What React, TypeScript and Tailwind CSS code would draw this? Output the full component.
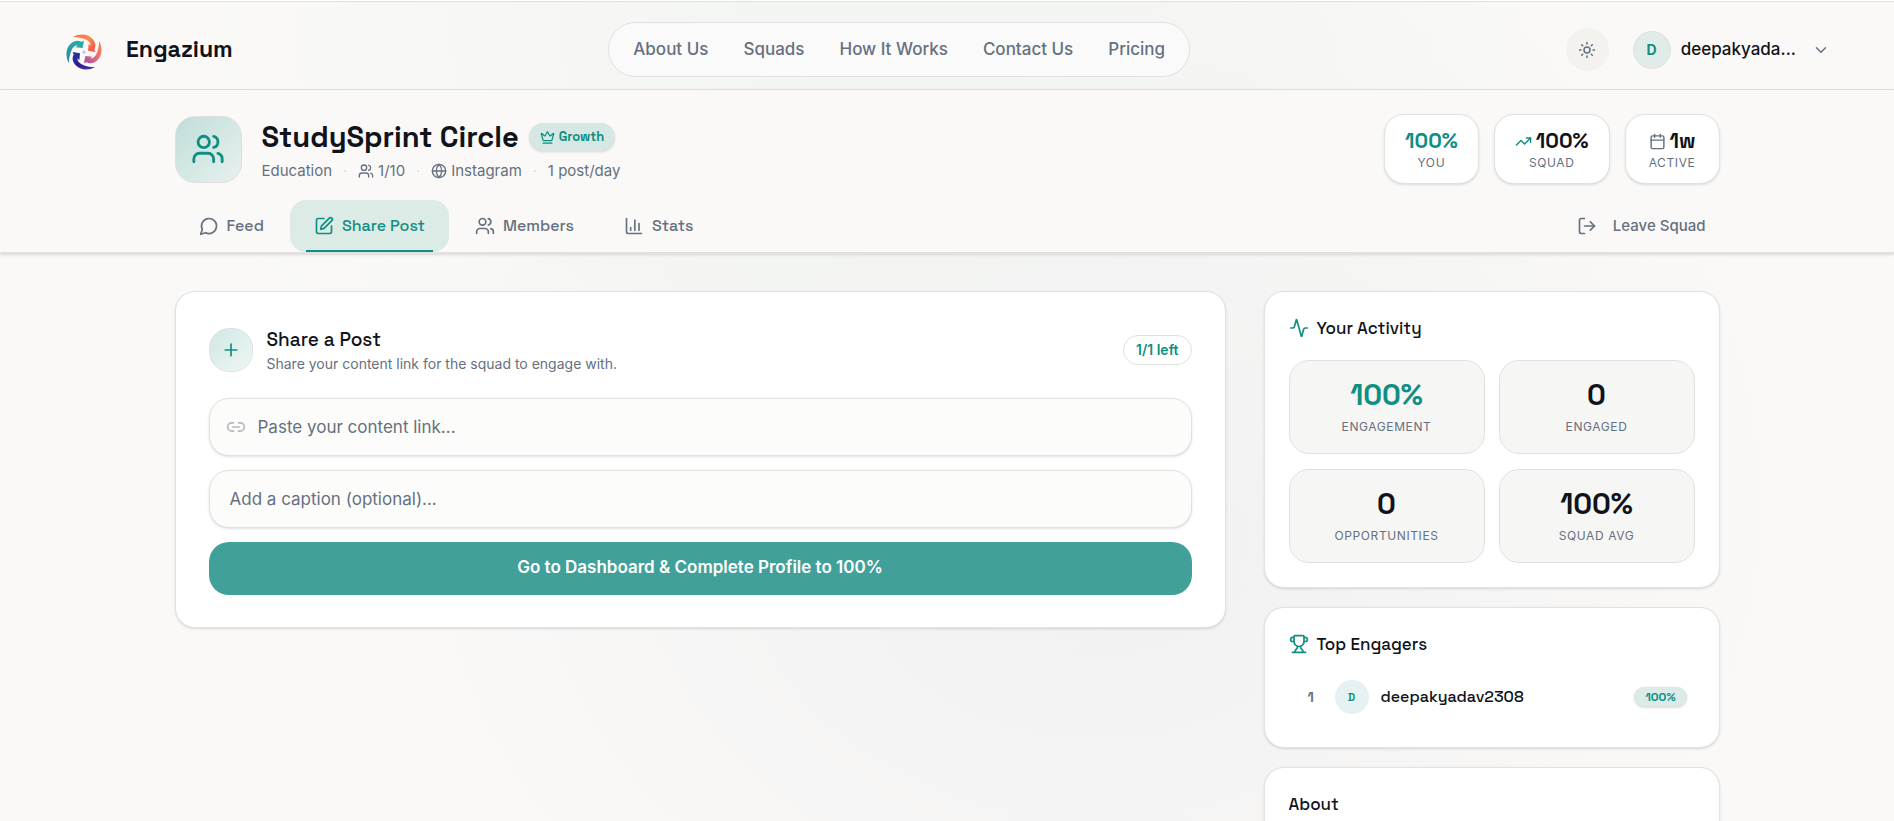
import type { ReactNode } from "react";
import {
  Activity,
  Calendar,
  ChartColumn,
  ChevronDown,
  Crown,
  Globe,
  Link2,
  LogOut,
  Plus,
  SquarePen,
  Sun,
  TrendingUp,
  Trophy,
  Users,
} from "lucide-react";

const display = "font-['Space_Grotesk','Inter',sans-serif]";

const navLinks = ["About Us", "Squads", "How It Works", "Contact Us", "Pricing"];

const activity = [
  { value: "100%", label: "Engagement", accent: true },
  { value: "0", label: "Engaged" },
  { value: "0", label: "Opportunities" },
  { value: "100%", label: "Squad Avg" },
];

function Logo() {
  const blade = "M9 88C-3 66 0 42 14 29C23 20 36 17 46 23L54 20L50 42L29 40L35 34C27 34 20 40 16 50C12 60 8 74 9 88Z";
  return (
    <svg viewBox="0 0 108 108" className="size-9" aria-hidden="true">
      <defs>
        <linearGradient id="teal" x1="0" y1="1" x2="1" y2="0">
          <stop offset="0" stopColor="#2b7fb0" />
          <stop offset="0.5" stopColor="#2a9fa8" />
          <stop offset="1" stopColor="#2fb09e" />
        </linearGradient>
        <linearGradient id="orange" x1="0" y1="1" x2="1" y2="0">
          <stop offset="0" stopColor="#fb7050" />
          <stop offset="0.5" stopColor="#f98a48" />
          <stop offset="1" stopColor="#f24a4f" />
        </linearGradient>
        <linearGradient id="pink" x1="0" y1="1" x2="1" y2="0">
          <stop offset="0" stopColor="#fb8a48" />
          <stop offset="0.5" stopColor="#ec6a78" />
          <stop offset="1" stopColor="#9a50a8" />
        </linearGradient>
        <linearGradient id="navy" x1="0" y1="1" x2="1" y2="0">
          <stop offset="0" stopColor="#5b30a8" />
          <stop offset="0.5" stopColor="#2b2096" />
          <stop offset="1" stopColor="#24389c" />
        </linearGradient>
      </defs>
      <path d={blade} fill="url(#teal)" />
      <path d={blade} fill="url(#orange)" transform="rotate(90 54 54)" />
      <path d={blade} fill="url(#pink)" transform="rotate(180 54 54)" />
      <path d={blade} fill="url(#navy)" transform="rotate(270 54 54)" />
      <path d="M54 48L60 58H48Z" fill="#c0b2e4" />
    </svg>
  );
}

function ChatIcon() {
  return (
    <svg viewBox="0 0 24 24" className="size-5" fill="none" stroke="currentColor" strokeWidth="2" strokeLinecap="round" strokeLinejoin="round" aria-hidden="true">
      <path d="M7.9 20A9 9 0 1 0 4 16.1L2 22Z" />
    </svg>
  );
}

function Tab({ icon, label, active = false }: { icon: ReactNode; label: string; active?: boolean }) {
  return (
    <button
      type="button"
      role="tab"
      aria-selected={active}
      className={`relative flex h-[52px] items-center gap-2 rounded-2xl px-6 text-base font-medium ${display} ${
        active ? "bg-[#dcebe6] text-[#0f8e82]" : "text-[#667080]"
      }`}
    >
      {icon}
      {label}
      {active && <span className="absolute inset-x-4 bottom-0 h-0.5 bg-[#0f8e82]" />}
    </button>
  );
}

function HeaderStat({ value, label, icon, accent = false }: { value: string; label: string; icon?: ReactNode; accent?: boolean }) {
  return (
    <div className="flex h-[70px] min-w-[95px] flex-col items-center justify-center rounded-[20px] border border-[#e3e2df] bg-white px-5 pt-1 shadow-sm">
      <div className={`flex items-center gap-1 text-[21px] leading-6 font-bold ${display} ${accent ? "text-[#0f8e82]" : "text-[#10131a]"}`}>
        {icon}
        {value}
      </div>
      <div className="text-xs leading-5 tracking-wider text-[#667080] uppercase">{label}</div>
    </div>
  );
}

function Card({ className = "", children }: { className?: string; children: ReactNode }) {
  return <section className={`rounded-[20px] border border-[#e3e2df] bg-white shadow-sm ${className}`}>{children}</section>;
}

function CardTitle({ icon, children }: { icon?: ReactNode; children: ReactNode }) {
  return (
    <h2 className={`flex items-center gap-2 text-[17px] leading-6 font-medium text-[#10131a] ${display}`}>
      {icon}
      {children}
    </h2>
  );
}

function Dot() {
  return <span className="size-0.5 rounded-full bg-[#dcdcdc]" />;
}

export default function App() {
  return (
    <div className="min-h-screen bg-[#faf9f7] bg-[radial-gradient(ellipse_700px_700px_at_48%_0,#f2f5f2_0%,transparent_100%),radial-gradient(ellipse_700px_600px_at_58%_60%,#f1f0f2_0%,transparent_100%)] font-['Inter',sans-serif] text-[#10131a]">
      <header className="mt-px flex h-[89px] items-center justify-between border-y border-[#dfe0df] px-16 pt-2">
        <a href="#home" className="flex items-center gap-[22px]">
          <span className="flex size-10 items-center justify-center pt-1">
            <Logo />
          </span>
          <span className={`text-[23px] font-semibold ${display}`}>Engazium</span>
        </a>
        <nav className="flex h-[55px] items-center gap-[35px] rounded-full border border-[#e1e2df] bg-[#fafafa] px-6">
          {navLinks.map((link) => (
            <a key={link} href="#nav" className="text-[17px] font-medium text-[#667080]">
              {link}
            </a>
          ))}
        </nav>
        <div className="flex items-center justify-end gap-6">
          <button type="button" aria-label="Toggle theme" className="flex size-[43px] items-center justify-center rounded-full bg-[#f3f2ee] text-[#667080]">
            <Sun className="size-[18px]" />
          </button>
          <button type="button" className="flex items-center gap-2.5 text-[17px] font-medium">
            <span className="flex size-[38px] items-center justify-center rounded-full border border-[#dfe2df] bg-[#e1ece8] text-sm font-bold text-[#0f8e82]">D</span>
            <span>deepakyada...</span>
            <ChevronDown className="ml-1.5 size-[18px] text-[#667080]" />
          </button>
        </div>
      </header>

      <div className="border-b-2 border-[#e2e1df] bg-[#faf9f7] shadow-sm">
        <div className="mx-auto max-w-[1545px]">
          <div className="flex items-center justify-between pt-6 pb-4">
            <div className="flex items-center gap-5">
              <div className="flex size-[67px] items-center justify-center rounded-[20px] border border-[#dfe0dd] bg-linear-to-br from-[#c0deda] to-[#e8f1ee] text-[#0f8e82]">
                <Users className="size-[34px]" />
              </div>
              <div className="pt-1">
                <div className="flex items-center gap-2.5">
                  <h1 className={`text-[29px] leading-9 font-semibold ${display}`}>StudySprint Circle</h1>
                  <span className={`flex h-7 items-center gap-1 rounded-full border border-[#dde5e1] bg-[#d5e8e3] px-2.5 text-[13px] font-semibold text-[#0f8e82] shadow-sm ${display}`}>
                    <Crown className="size-[15px]" />
                    Growth
                  </span>
                </div>
                <div className="mt-1 flex items-center gap-3 text-[15px] leading-6 text-[#667080]">
                  <span>Education</span>
                  <Dot />
                  <span className="flex items-center gap-1"><Users className="size-4" />1/10</span>
                  <Dot />
                  <span className="flex items-center gap-1"><Globe className="size-4" />Instagram</span>
                  <Dot />
                  <span>1 post/day</span>
                </div>
              </div>
            </div>
            <div className="flex gap-[15px]">
              <HeaderStat value="100%" label="You" accent />
              <HeaderStat value="100%" label="Squad" icon={<TrendingUp className="size-[17px] text-[#0f8e82]" />} />
              <HeaderStat value="1w" label="Active" icon={<Calendar className="size-[17px] text-[#667080]" />} />
            </div>
          </div>
          <div className="flex items-center justify-between">
            <div role="tablist" className="flex gap-0.5">
              <Tab icon={<ChatIcon />} label="Feed" />
              <Tab icon={<SquarePen className="size-5" />} label="Share Post" active />
              <Tab icon={<Users className="size-5" />} label="Members" />
              <Tab icon={<ChartColumn className="size-5" />} label="Stats" />
            </div>
            <button type="button" className="flex items-center gap-4 pr-3.5 text-[15px] font-medium text-[#667080]">
              <LogOut className="size-5" />
              Leave Squad
            </button>
          </div>
        </div>
      </div>

      <main className="mx-auto flex max-w-[1545px] items-start gap-[38px] pt-[37px]">
        <Card className="flex-1 px-[33px] py-8">
          <div className="flex items-center justify-between">
            <div className="flex items-center gap-3.5">
              <div className="flex size-11 items-center justify-center rounded-[20px] border border-[#dfe3e0] bg-linear-to-br from-[#d0e7e4] to-[#eff7f5] text-[#0f8e82]">
                <Plus className="size-5" />
              </div>
              <div className="pt-1">
                <h2 className={`text-[19px] leading-6 font-medium ${display}`}>Share a Post</h2>
                <p className="text-sm leading-6 text-[#667080]">Share your content link for the squad to engage with.</p>
              </div>
            </div>
            <span className="flex h-[30px] items-center rounded-full border border-[#e1e1df] px-3 text-sm font-semibold text-[#0f8e82]">1/1 left</span>
          </div>
          <form className="mt-[22px] flex flex-col gap-3.5">
            <label className="flex h-[58px] items-center gap-3 rounded-[20px] border border-[#e1e1de] bg-[#fcfcfa] px-4 shadow-sm">
              <Link2 className="size-5 text-[#b4b8bf]" />
              <input type="url" aria-label="Content link" placeholder="Paste your content link..." className="h-full flex-1 bg-transparent text-[17px] outline-none placeholder:text-[#667080]" />
            </label>
            <input type="text" aria-label="Caption" placeholder="Add a caption (optional)..." className="h-[58px] rounded-[20px] border border-[#e1e1de] bg-[#fcfcfa] px-5 text-[17px] shadow-sm outline-none placeholder:text-[#667080]" />
            <button type="button" className="h-[53px] rounded-[20px] bg-[#41a19a] pb-0.5 text-[17px] font-semibold text-white">
              Go to Dashboard &amp; Complete Profile to 100%
            </button>
          </form>
        </Card>

        <aside className="flex w-[456px] shrink-0 flex-col gap-[19px]">
          <Card className="p-6">
            <CardTitle icon={<Activity className="size-5 text-[#0f8e82]" />}>Your Activity</CardTitle>
            <div className="mt-5 grid grid-cols-2 gap-x-3.5 gap-y-[15px]">
              {activity.map((item) => (
                <div key={item.label} className="flex h-[94px] flex-col items-center justify-center rounded-[20px] border border-[#e1e1df] bg-[#f6f6f4]">
                  <div className={`text-[29px] leading-9 font-semibold ${display} ${item.accent ? "text-[#0f8e82]" : "text-[#10131a]"}`}>{item.value}</div>
                  <div className="mt-1 text-xs leading-5 tracking-wider text-[#667080] uppercase">{item.label}</div>
                </div>
              ))}
            </div>
          </Card>
          <Card className="px-6 pt-6 pb-[33px]">
            <CardTitle icon={<Trophy className="size-5 text-[#0f8e82]" />}>Top Engagers</CardTitle>
            <div className={`mt-6 flex items-center pr-2 pl-[19px] ${display}`}>
              <span className="w-[27px] text-sm font-bold text-[#667080]">1</span>
              <span className="flex size-[34px] items-center justify-center rounded-full bg-[#e5f2f1] text-[11px] font-bold text-[#0f8e82]">D</span>
              <span className="ml-3 flex-1 text-base font-medium">deepakyadav2308</span>
              <span className="flex h-5 items-center rounded-full border border-[#dde5e1] bg-[#dbece8] px-2.5 text-xs font-semibold text-[#0f8e82] shadow-sm">100%</span>
            </div>
          </Card>
          <Card className="p-6">
            <CardTitle>About</CardTitle>
          </Card>
        </aside>
      </main>
    </div>
  );
}
